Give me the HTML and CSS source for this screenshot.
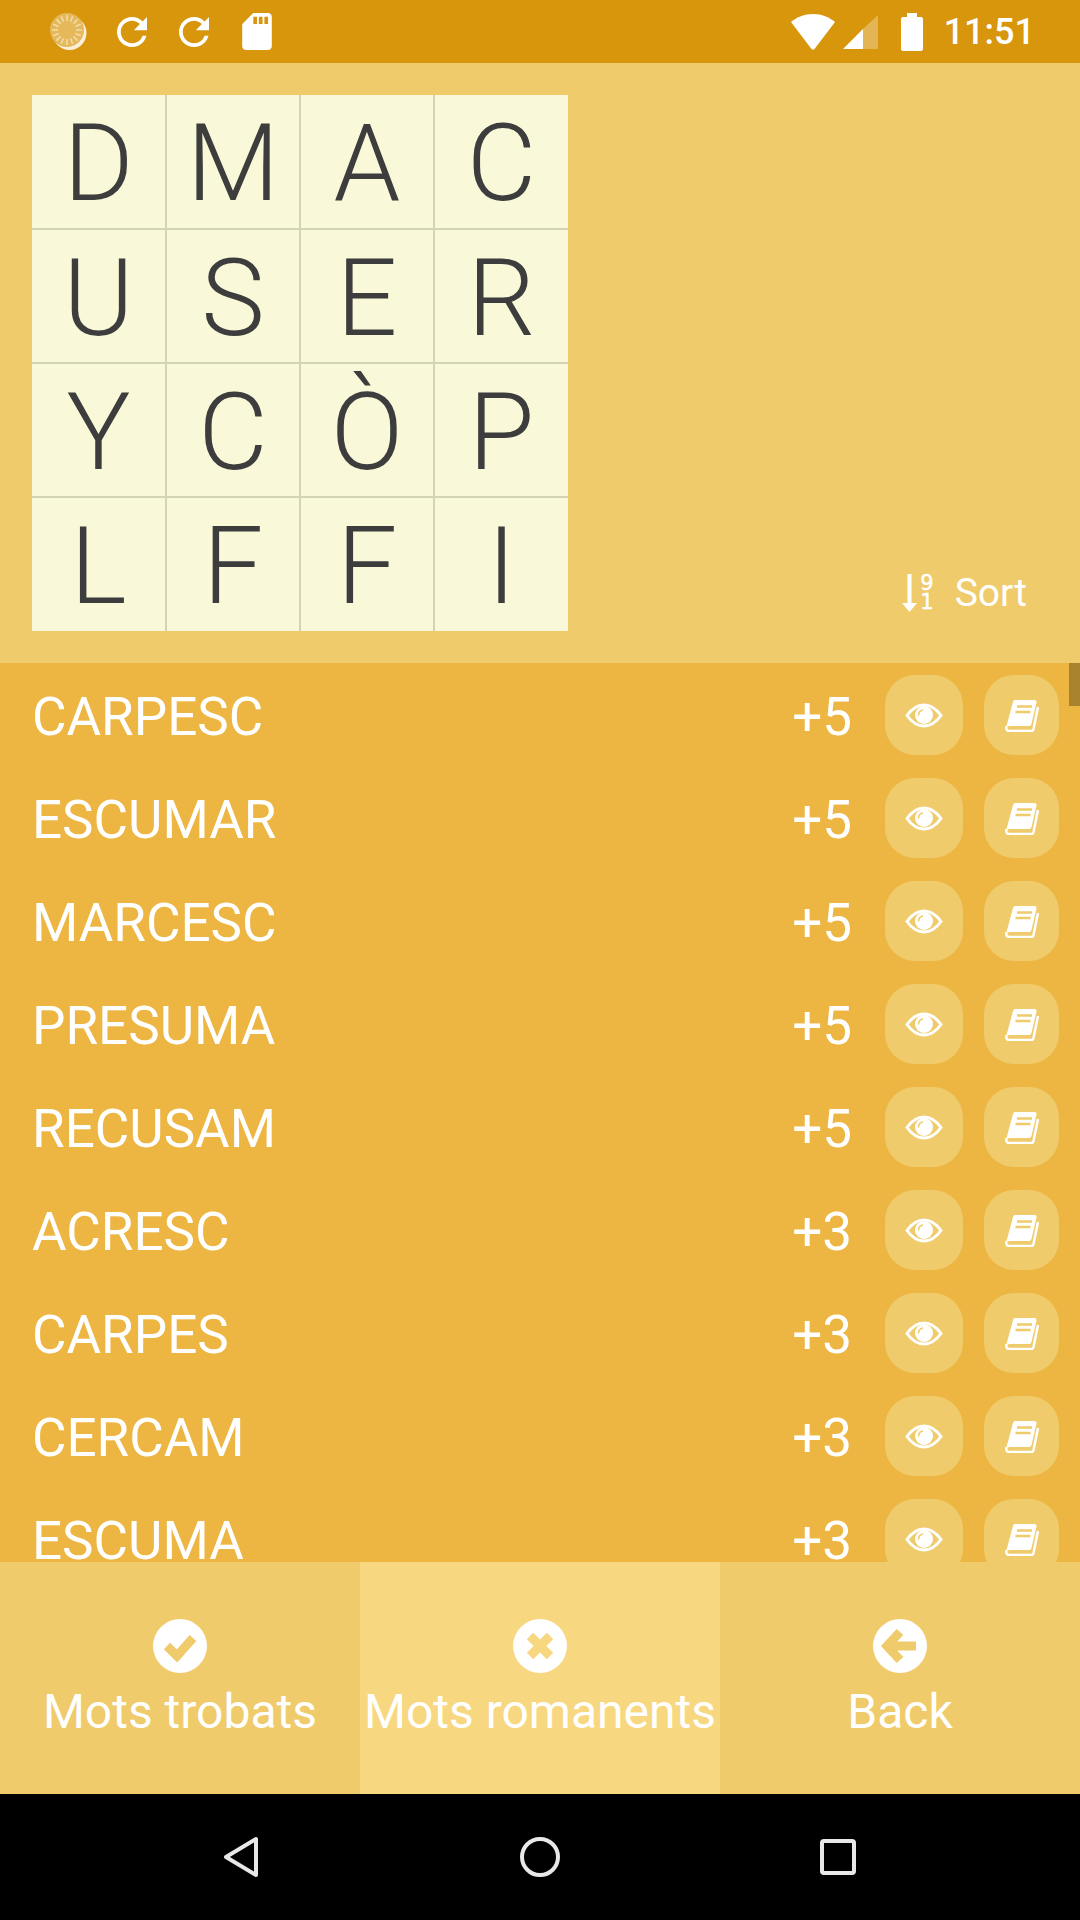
FILE: index.html
```html
<!DOCTYPE html>
<html lang="en">
<head>
    <meta charset="UTF-8">
    <title>Mots</title>
    <link rel="stylesheet" href="styles.css">
</head>
<body>
    <svg class="defs">
        <symbol id="eye" viewBox="0 0 38 25">
            <path d="M2 12.5C7 5.500 12.500 2 19 2S31 5.500 36 12.500C31 19.500 25.500 23 19 23S7 19.500 2 12.500Z" fill="none" stroke="#fff" stroke-width="3"/>
            <circle cx="19" cy="12" r="9" fill="#fff"/>
            <path d="M13.500 12.500C13.500 9.500 15.500 7.500 18 7" fill="none" stroke="#efcb6b" stroke-width="1.500"/>
        </symbol>
        <symbol id="book" viewBox="0 0 34 33">
            <path d="M10 1H29.500Q32 1 31.500 3.500L26.500 25Q26 27 24 27H5Q2 27 1 29L8 3Q8.500 1 10 1Z" fill="#fff"/>
            <path d="M1.500 27Q.5 32 4.500 32H26.500Q28 32 28.500 30L33 8" fill="none" stroke="#fff" stroke-width="2.500"/>
            <path d="M12 7.500H27M10.500 13H25.500" stroke="#efcb6b" stroke-width="2.500"/>
        </symbol>
        <symbol id="refresh" viewBox="4 4 16 16">
            <path d="M17.650 6.350A7.958 7.958 0 0 0 12 4c-4.420 0-7.990 3.580-7.990 8s3.570 8 7.990 8c3.730 0 6.840-2.550 7.730-6h-2.080A5.990 5.990 0 0 1 12 18c-3.310 0-6-2.690-6-6s2.690-6 6-6c1.660 0 3.140.69 4.220 1.780L13 11h7V4l-2.350 2.350z" fill="#fff"/>
        </symbol>
    </svg>

    <div class="app">
        <!-- status bar -->
        <div class="status">
            <svg class="st-spinner" width="37" height="37" viewBox="0 0 37 37">
                <circle cx="19.500" cy="20" r="17" fill="#fff" opacity=".85"/>
                <circle cx="17" cy="17" r="17" fill="#e5b85a"/>
                <g stroke="#f2dcae" stroke-width="1.500">
                    <path d="M17 2V8M17 26V32M2 17H8M26 17H32M6.400 6.400L10.600 10.600M23.400 23.400L27.600 27.600M6.400 27.600L10.600 23.400M23.400 10.600L27.600 6.400"/>
                    <path d="M11.300 3.200L13.500 8.700M20.500 25.300L22.700 30.800M3.200 11.300L8.700 13.500M25.300 20.500L30.800 22.700M3.200 22.700L8.700 20.500M25.300 13.500L30.800 11.300M11.300 30.800L13.500 25.300M20.500 8.700L22.700 3.200"/>
                </g>
            </svg>
            <svg class="st-refresh" width="30" height="30"><use href="#refresh"/></svg>
            <svg class="st-refresh" width="30" height="30"><use href="#refresh"/></svg>
            <svg class="st-sd" width="30" height="37" viewBox="4 2 16 20">
                <path d="M18 2h-8L4.020 8 4 20c0 1.100.9 2 2 2h12c1.100 0 2-.9 2-2V4c0-1.100-.9-2-2-2zm-6 6h-2V4h2v4zm3 0h-2V4h2v4zm3 0h-2V4h2v4z" fill="#fff"/>
            </svg>
            <div class="st-right">
                <svg width="44" height="36" viewBox="0 0 44 36">
                    <path d="M22 0C31 0 38 3 44 8L23.500 35Q22 36 20.500 35L0 8C6 3 13 0 22 0Z" fill="#fff"/>
                </svg>
                <svg class="st-signal" width="35" height="34" viewBox="0 0 35 34">
                    <path d="M20 14V34H0Z" fill="#fff"/>
                    <path d="M20 14L35 0V34H20Z" fill="#fff" opacity=".3"/>
                </svg>
                <svg class="st-battery" width="22" height="38" viewBox="0 0 22 38">
                    <path d="M6 0H16V4H20Q22 4 22 6V36Q22 38 20 38H2Q0 38 0 36V6Q0 4 2 4H6Z" fill="#fff"/>
                </svg>
                <span class="st-time">11:51</span>
            </div>
        </div>

        <!-- board -->
        <div class="head">
            <div class="board">
                <div class="cell">D</div><div class="cell">M</div><div class="cell">A</div><div class="cell">C</div>
                <div class="cell">U</div><div class="cell">S</div><div class="cell">E</div><div class="cell">R</div>
                <div class="cell">Y</div><div class="cell">C</div><div class="cell">Ò</div><div class="cell">P</div>
                <div class="cell">L</div><div class="cell">F</div><div class="cell">F</div><div class="cell">I</div>
            </div>
            <div class="sort">
                <div class="sort-icon">
                    <svg width="15" height="38" viewBox="0 0 15 38">
                        <path d="M5.500 0H9.500V29H15L7.500 38L0 29H5.500Z" fill="#fff"/>
                    </svg>
                    <div class="sort-nums"><span>9</span><span>1</span></div>
                </div>
                <span>Sort</span>
            </div>
        </div>

        <!-- word list -->
        <div class="list">
            <div class="scroll-thumb"></div>
            <div class="row"><span class="word">CARPESC</span><span class="score">+5</span><a class="btn"><svg width="38" height="25"><use href="#eye"/></svg></a><a class="btn"><svg width="34" height="33"><use href="#book"/></svg></a></div>
            <div class="row"><span class="word">ESCUMAR</span><span class="score">+5</span><a class="btn"><svg width="38" height="25"><use href="#eye"/></svg></a><a class="btn"><svg width="34" height="33"><use href="#book"/></svg></a></div>
            <div class="row"><span class="word">MARCESC</span><span class="score">+5</span><a class="btn"><svg width="38" height="25"><use href="#eye"/></svg></a><a class="btn"><svg width="34" height="33"><use href="#book"/></svg></a></div>
            <div class="row"><span class="word">PRESUMA</span><span class="score">+5</span><a class="btn"><svg width="38" height="25"><use href="#eye"/></svg></a><a class="btn"><svg width="34" height="33"><use href="#book"/></svg></a></div>
            <div class="row"><span class="word">RECUSAM</span><span class="score">+5</span><a class="btn"><svg width="38" height="25"><use href="#eye"/></svg></a><a class="btn"><svg width="34" height="33"><use href="#book"/></svg></a></div>
            <div class="row"><span class="word">ACRESC</span><span class="score">+3</span><a class="btn"><svg width="38" height="25"><use href="#eye"/></svg></a><a class="btn"><svg width="34" height="33"><use href="#book"/></svg></a></div>
            <div class="row"><span class="word">CARPES</span><span class="score">+3</span><a class="btn"><svg width="38" height="25"><use href="#eye"/></svg></a><a class="btn"><svg width="34" height="33"><use href="#book"/></svg></a></div>
            <div class="row"><span class="word">CERCAM</span><span class="score">+3</span><a class="btn"><svg width="38" height="25"><use href="#eye"/></svg></a><a class="btn"><svg width="34" height="33"><use href="#book"/></svg></a></div>
            <div class="row"><span class="word">ESCUMA</span><span class="score">+3</span><a class="btn"><svg width="38" height="25"><use href="#eye"/></svg></a><a class="btn"><svg width="34" height="33"><use href="#book"/></svg></a></div>
        </div>

        <!-- tabs -->
        <div class="tabs">
            <div class="tab">
                <svg width="54" height="54" viewBox="-27 -27 54 54"><circle r="27" fill="#fff"/><path d="M-13 0L-3 10L13 -8" class="mark"/></svg>
                <span>Mots trobats</span>
            </div>
            <div class="tab tab-active">
                <svg width="54" height="54" viewBox="-27 -27 54 54"><circle r="27" fill="#fff"/><path d="M-10 -10L10 10M10 -10L-10 10" class="mark"/></svg>
                <span>Mots romanents</span>
            </div>
            <div class="tab">
                <svg width="54" height="54" viewBox="-27 -27 54 54"><circle r="27" fill="#fff"/><path d="M0 -14L-13 0L0 14M-11 0H16" class="mark"/></svg>
                <span>Back</span>
            </div>
        </div>

        <!-- android nav -->
        <div class="nav">
            <svg width="40" height="42" viewBox="0 0 40 42"><path d="M34 3V39L4 21Z" class="nav-line"/></svg>
            <svg width="40" height="42" viewBox="0 0 40 42"><circle cx="20" cy="21" r="18" class="nav-line"/></svg>
            <svg width="40" height="42" viewBox="0 0 40 42"><rect x="4" y="5" width="32" height="32" rx="2" class="nav-line"/></svg>
        </div>
    </div>
</body>
</html>
```

FILE: styles.css
```css
* {
    box-sizing: border-box;
}

body {
    margin: 0;
    font-family: Roboto, "Liberation Sans", sans-serif;
    color: #fff;
}

.defs {
    display: none;
}

.app {
    display: flex;
    flex-direction: column;
    width: 1080px;
    height: 1920px;
    overflow: hidden;
}

/* Status bar */
.status {
    display: flex;
    align-items: center;
    flex: none;
    height: 63px;
    padding: 0 45px 0 50px;
    background: #d8960c;
}

.st-refresh {
    margin-left: 30px;
}

.st-refresh + .st-refresh {
    margin-left: 32px;
}

.st-sd {
    margin-left: 33px;
}

.st-right {
    display: flex;
    align-items: center;
    margin-left: auto;
}

.st-signal {
    margin-left: 8px;
}

.st-battery {
    margin-left: 23px;
}

.st-time {
    margin-left: 21px;
    font-size: 36px;
    font-weight: 500;
    line-height: 40px;
}

/* Board */
.head {
    display: flex;
    justify-content: space-between;
    flex: none;
    height: 600px;
    padding: 32px 53px 47px 32px;
    background: #efcb6b;
}

.board {
    display: grid;
    grid-template-columns: 133px 132px 132px 133px;
    grid-template-rows: 133px 132px 132px 133px;
    gap: 2px;
    width: 536px;
    height: 536px;
    background: #d3d3b5;
}

.cell {
    display: flex;
    align-items: center;
    justify-content: center;
    padding-top: 4px;
    background: #f9f9d9;
    color: #3d3d3d;
    font-size: 107px;
    font-weight: 300;
    line-height: 1;
}

.sort {
    display: flex;
    align-items: center;
    gap: 21px;
    align-self: flex-end;
    font-size: 39px;
    line-height: 46px;
}

.sort-icon {
    display: flex;
    gap: 3px;
}

.sort-nums {
    display: flex;
    flex-direction: column;
    font-family: "DejaVu Sans", sans-serif;
    font-size: 21px;
    line-height: 19px;
    -webkit-text-stroke: 0.5px #fff;
}

/* Word list */
.list {
    position: relative;
    flex: 1;
    min-height: 0;
    overflow: hidden;
    background: #edb541;
}

.scroll-thumb {
    position: absolute;
    top: 0;
    right: 0;
    width: 11px;
    height: 43px;
    background: #a9822e;
}

.row {
    display: flex;
    align-items: center;
    height: 103px;
    padding: 0 21px 0 32px;
}

.word,
.score {
    padding-top: 4px;
    font-size: 53px;
}

.word {
    flex: 1;
}

.score {
    margin-right: 33px;
}

.btn {
    display: flex;
    align-items: center;
    justify-content: center;
    width: 78px;
    height: 80px;
    margin-top: 1px;
    border-radius: 30px;
    background: #efcb6b;
}

.btn + .btn {
    width: 75px;
    margin-left: 21px;
}

/* Bottom tabs */
.tabs {
    display: flex;
    flex: none;
    height: 232px;
}

.tab {
    display: flex;
    flex-direction: column;
    align-items: center;
    flex: 1;
    gap: 11px;
    padding-top: 57px;
    background: #efcb6b;
    color: #efcb6b;
    font-size: 48px;
    line-height: 56px;
    white-space: nowrap;
}

.tab span {
    color: #fff;
}

.tab-active {
    background: #f8d781;
    color: #f8d781;
}

.mark {
    fill: none;
    stroke: currentColor;
    stroke-width: 9;
}

/* Android nav */
.nav {
    display: flex;
    align-items: center;
    justify-content: center;
    flex: none;
    gap: 258px;
    height: 126px;
    background: #000;
}

.nav-line {
    fill: none;
    stroke: #e8e8e8;
    stroke-width: 4;
    stroke-linejoin: round;
}
```
